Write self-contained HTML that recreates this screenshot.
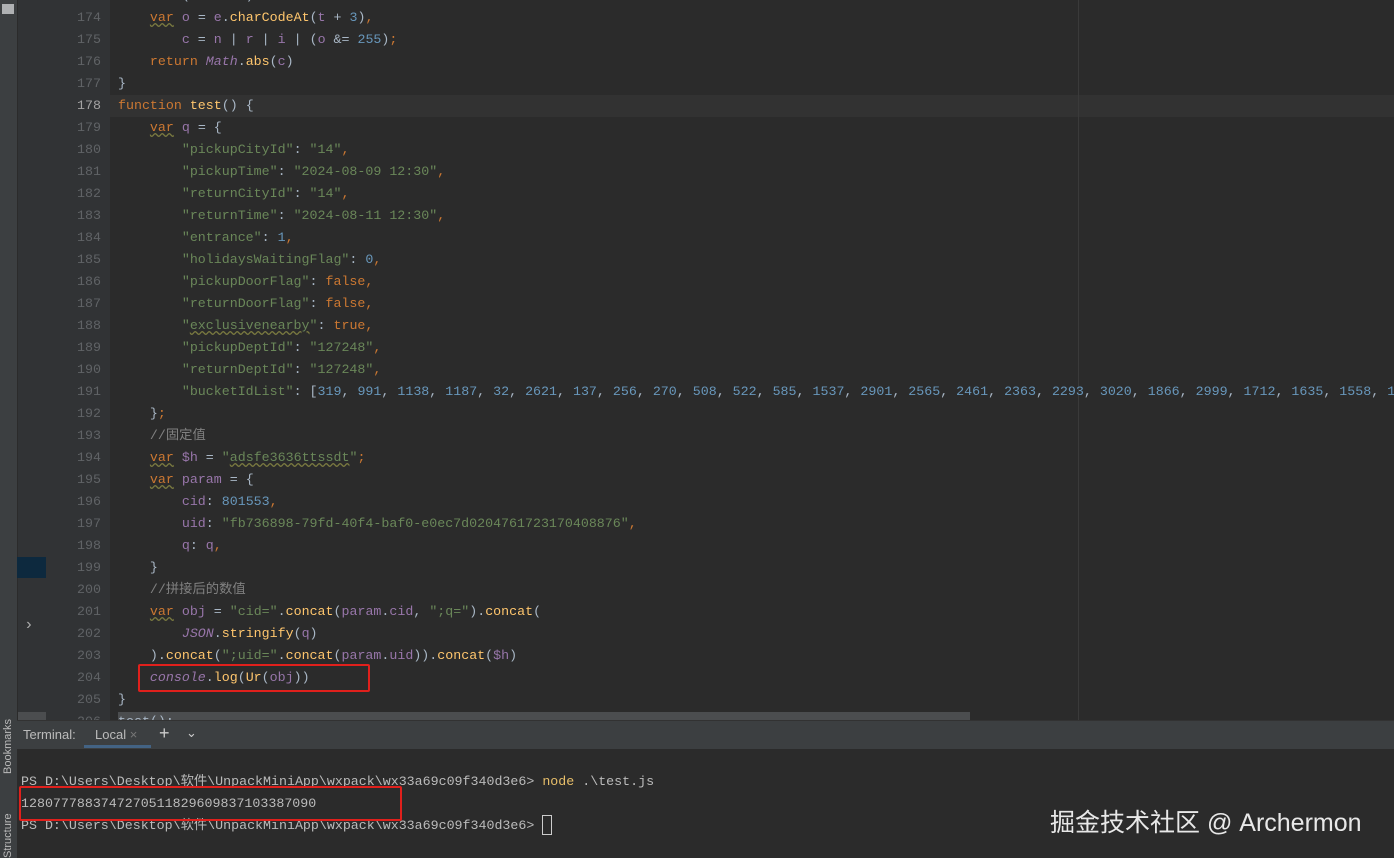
<!DOCTYPE html><html><head><meta charset="utf-8"><style>
body{margin:0;width:1394px;height:858px;overflow:hidden;background:#2b2b2b;position:relative;font-family:"Liberation Mono","Noto Sans CJK SC",monospace;font-size:13.3px;color:#a9b7c6}
.l{position:absolute;left:118px;height:22px;line-height:22px;white-space:pre}
.n{position:absolute;left:46px;width:55px;text-align:right;height:22px;line-height:22px;color:#606366}
.k{color:#cc7832}.s{color:#6a8759}.d{color:#6897bb}.p{color:#9876aa}.f{color:#ffc66d}.c{color:#808080}.i{font-style:italic}.u{text-decoration:underline wavy #7a7a40}
</style></head><body>
<div style="position:absolute;left:0;top:0;width:17px;height:858px;background:#3c3f41;border-right:1px solid #2b2b2b"></div>
<div style="position:absolute;left:2px;top:4px;width:12px;height:10px;background:#afb1b3"></div>
<div style="position:absolute;left:18px;top:0;width:92px;height:720px;background:#313335"></div>
<div style="position:absolute;left:17px;top:557px;width:29px;height:21px;background:#0d293e"></div>
<div style="position:absolute;left:110px;top:95px;width:1284px;height:22px;background:#323232"></div>
<div style="position:absolute;left:1078px;top:0;width:1px;height:720px;background:#3a3a3a"></div>
<div style="position:absolute;left:118px;top:712px;width:852px;height:8px;background:#4b4d4f"></div>
<div style="position:absolute;left:18px;top:712px;width:28px;height:8px;background:#4b4d4f"></div>
<div style="position:absolute;left:24px;top:616px;color:#aaa;font-size:16px">›</div>
<div id="code"></div>
<script>
const L={173:'    i = (<span class="d">255</span> & i) ...',
174:'    <span class="k u">var</span> <span class="p">o</span> = <span class="p">e</span>.<span class="f">charCodeAt</span>(<span class="p">t</span> + <span class="d">3</span>)<span class="k">,</span>',
175:'        <span class="p">c</span> = <span class="p">n</span> | <span class="p">r</span> | <span class="p">i</span> | (<span class="p">o</span> &= <span class="d">255</span>)<span class="k">;</span>',
176:'    <span class="k">return</span> <span class="p i">Math</span>.<span class="f">abs</span>(<span class="p">c</span>)',
177:'}',
178:'<span class="k">function</span> <span class="f">test</span>() {',
179:'    <span class="k u">var</span> <span class="p">q</span> = {',
180:'        <span class="s">"pickupCityId"</span>: <span class="s">"14"</span><span class="k">,</span>',
181:'        <span class="s">"pickupTime"</span>: <span class="s">"2024-08-09 12:30"</span><span class="k">,</span>',
182:'        <span class="s">"returnCityId"</span>: <span class="s">"14"</span><span class="k">,</span>',
183:'        <span class="s">"returnTime"</span>: <span class="s">"2024-08-11 12:30"</span><span class="k">,</span>',
184:'        <span class="s">"entrance"</span>: <span class="d">1</span><span class="k">,</span>',
185:'        <span class="s">"holidaysWaitingFlag"</span>: <span class="d">0</span><span class="k">,</span>',
186:'        <span class="s">"pickupDoorFlag"</span>: <span class="k">false,</span>',
187:'        <span class="s">"returnDoorFlag"</span>: <span class="k">false,</span>',
188:'        <span class="s">"<span class="u">exclusivenearby</span>"</span>: <span class="k">true,</span>',
189:'        <span class="s">"pickupDeptId"</span>: <span class="s">"127248"</span><span class="k">,</span>',
190:'        <span class="s">"returnDeptId"</span>: <span class="s">"127248"</span><span class="k">,</span>',
191:'        <span class="s">"bucketIdList"</span>: [<span class="d">319</span>, <span class="d">991</span>, <span class="d">1138</span>, <span class="d">1187</span>, <span class="d">32</span>, <span class="d">2621</span>, <span class="d">137</span>, <span class="d">256</span>, <span class="d">270</span>, <span class="d">508</span>, <span class="d">522</span>, <span class="d">585</span>, <span class="d">1537</span>, <span class="d">2901</span>, <span class="d">2565</span>, <span class="d">2461</span>, <span class="d">2363</span>, <span class="d">2293</span>, <span class="d">3020</span>, <span class="d">1866</span>, <span class="d">2999</span>, <span class="d">1712</span>, <span class="d">1635</span>, <span class="d">1558</span>, <span class="d">1</span>',
192:'    }<span class="k">;</span>',
193:'    <span class="c">//固定值</span>',
194:'    <span class="k u">var</span> <span class="p">$h</span> = <span class="s">"<span class="u">adsfe3636ttssdt</span>"</span><span class="k">;</span>',
195:'    <span class="k u">var</span> <span class="p">param</span> = {',
196:'        <span class="p">cid</span>: <span class="d">801553</span><span class="k">,</span>',
197:'        <span class="p">uid</span>: <span class="s">"fb736898-79fd-40f4-baf0-e0ec7d0204761723170408876"</span><span class="k">,</span>',
198:'        <span class="p">q</span>: <span class="p">q</span><span class="k">,</span>',
199:'    }',
200:'    <span class="c">//拼接后的数值</span>',
201:'    <span class="k u">var</span> <span class="p">obj</span> = <span class="s">"cid="</span>.<span class="f">concat</span>(<span class="p">param</span>.<span class="p">cid</span>, <span class="s">";q="</span>).<span class="f">concat</span>(',
202:'        <span class="p i">JSON</span>.<span class="f">stringify</span>(<span class="p">q</span>)',
203:'    ).<span class="f">concat</span>(<span class="s">";uid="</span>.<span class="f">concat</span>(<span class="p">param</span>.<span class="p">uid</span>)).<span class="f">concat</span>(<span class="p">$h</span>)',
204:'    <span class="p i">console</span>.<span class="f">log</span>(<span class="f">Ur</span>(<span class="p">obj</span>))',
205:'}',
206:'test();'};
let h='';for(let n=173;n<=206;n++){const t=7+(n-174)*22;h+=`<div class="n" style="top:${t}px;${n==178?'color:#a4a3a3':''}">${n}</div><div class="l" style="top:${t}px">${L[n]}</div>`;}
document.getElementById('code').innerHTML=h;
</script>
<div style="position:absolute;left:138px;top:664px;width:228px;height:24px;border:2px solid #e0201c;border-radius:2px"></div>
<div style="position:absolute;left:17px;top:720px;width:1377px;height:138px;background:#2b2b2b"></div>
<div style="position:absolute;left:17px;top:720px;width:1377px;height:28px;background:#3c3f41;border-top:1px solid #323232"></div>
<div style="position:absolute;left:23px;top:727px;font-family:'Liberation Sans',sans-serif;font-size:13px;color:#bbb">Terminal:</div>
<div style="position:absolute;left:95px;top:727px;font-family:'Liberation Sans',sans-serif;font-size:13px;color:#bbb">Local <span style="color:#777">×</span></div>
<div style="position:absolute;left:84px;top:745px;width:67px;height:3px;background:#4a88c7;opacity:.5"></div>
<div style="position:absolute;left:159px;top:723px;color:#ccc;font-size:18px;font-family:'Liberation Sans',sans-serif">+</div>
<div style="position:absolute;left:186px;top:726px;color:#ccc;font-size:13px">⌄</div>
<div style="position:absolute;left:0;top:710px;width:17px;height:148px;background:#3c3f41"></div>
<div style="position:absolute;left:-24px;top:736px;transform:rotate(-90deg);font-family:'Liberation Sans',sans-serif;font-size:11px;color:#bbb;width:64px">Bookmarks</div>
<div style="position:absolute;left:-20px;top:824px;transform:rotate(-90deg);font-family:'Liberation Sans',sans-serif;font-size:11px;color:#bbb;width:56px">Structure</div>
<div style="position:absolute;left:21px;top:771px;line-height:22px;white-space:pre;color:#bbb">PS D:\Users\Desktop\软件\UnpackMiniApp\wxpack\wx33a69c09f340d3e6> <span style="color:#e8bf6a">node</span> .\test.js
12807778837472705118296098371033870​90
PS D:\Users\Desktop\软件\UnpackMiniApp\wxpack\wx33a69c09f340d3e6> <span style="display:inline-block;width:8px;height:18px;border:1px solid #ccc;vertical-align:middle"></span></div>
<div style="position:absolute;left:19px;top:786px;width:379px;height:31px;border:2px solid #e0201c;border-radius:2px"></div>
<div style="position:absolute;left:1050px;top:803px;font-family:'Liberation Sans','Noto Sans CJK SC',sans-serif;font-size:25px;color:#e8e8e8">掘金技术社区 @ Archermon</div>
</body></html>
